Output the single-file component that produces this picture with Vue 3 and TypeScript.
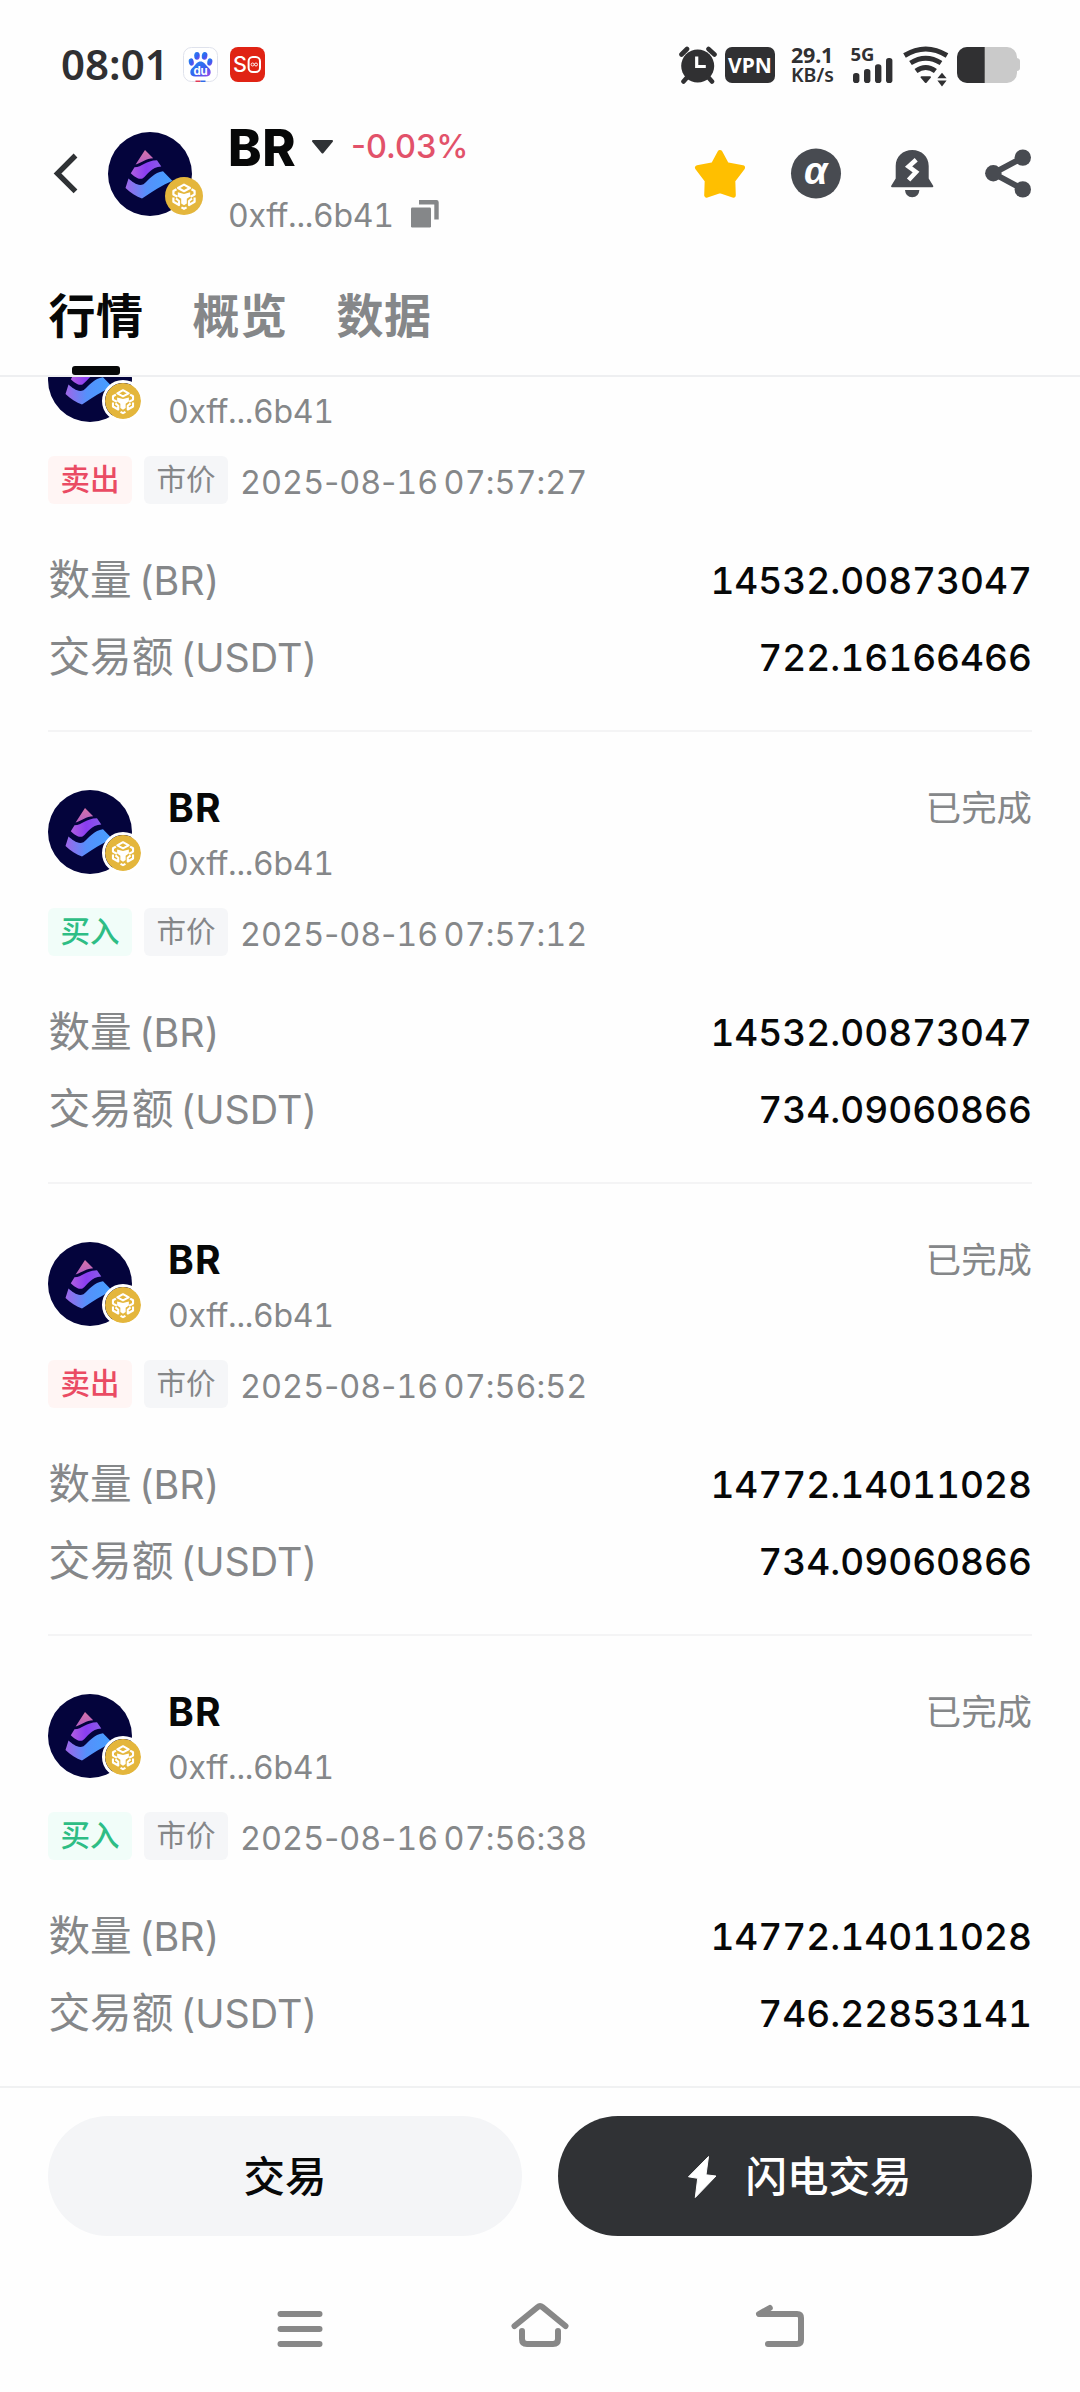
<script setup lang="ts">
interface Order {
  side: 'buy' | 'sell'
  date: string
  time: string
  amount: string
  total: string
}

const symbol = 'BR'
const address = '0xff...6b41'
const tabs = ['行情', '概览', '数据']
const activeTab = '行情'

const orders: Order[] = [
  { side: 'sell', date: '2025-08-16', time: '07:57:27', amount: '14532.00873047', total: '722.16166466' },
  { side: 'buy', date: '2025-08-16', time: '07:57:12', amount: '14532.00873047', total: '734.09060866' },
  { side: 'sell', date: '2025-08-16', time: '07:56:52', amount: '14772.14011028', total: '734.09060866' },
  { side: 'buy', date: '2025-08-16', time: '07:56:38', amount: '14772.14011028', total: '746.22853141' },
]
</script>

<template>
  <div class="screen">
    <svg class="defs" width="0" height="0" aria-hidden="true">
      <defs>
        <linearGradient id="tok-top" x1="0" y1="0" x2="0" y2="1">
          <stop offset="0" stop-color="#d673a8" />
          <stop offset="1" stop-color="#b45fc4" />
        </linearGradient>
        <linearGradient id="tok-mid" x1="0" y1="0" x2="1" y2="0">
          <stop offset="0" stop-color="#b05fe0" />
          <stop offset="0.5" stop-color="#8a3df2" />
          <stop offset="1" stop-color="#8a5ce8" />
        </linearGradient>
        <linearGradient id="tok-low" x1="0" y1="0" x2="1" y2="0">
          <stop offset="0" stop-color="#a065e8" />
          <stop offset="0.45" stop-color="#5590fb" />
          <stop offset="1" stop-color="#45a0ff" />
        </linearGradient>
        <linearGradient id="paw" x1="0" y1="0" x2="1" y2="1">
          <stop offset="0" stop-color="#1f8cf0" />
          <stop offset="0.6" stop-color="#3a5cf0" />
          <stop offset="1" stop-color="#a24be8" />
        </linearGradient>
        <symbol id="token" viewBox="0 0 84 84">
          <circle cx="42" cy="42" r="42" fill="#04043c" />
          <path d="M37 18L45.200 26.200C38 26.400 34 30.500 27.600 32.600Z" fill="url(#tok-top)" />
          <path d="M26.500 35.300C34 35.300 38 28.500 49 28.300L53.300 34.400C43 34.800 40 42.500 34.500 46.500C31 48 26 44.500 22.800 41.200Z" fill="url(#tok-mid)" />
          <path d="M20.500 46.600C25 50.500 30 54.500 35.500 52.300C42 47 46 40.300 55 39.300L64.500 49C55 52.500 43 60.500 34 66.500C28.500 64.500 22 60.500 17.500 56Z" fill="url(#tok-low)" />
        </symbol>
        <symbol id="chain" viewBox="0 0 38 38">
          <circle cx="19" cy="19" r="19" fill="#e4b63c" />
          <g fill="none" stroke="#fff" stroke-width="2.200" stroke-linejoin="round">
            <path d="M13 11L19 7.600L25 11L19 14.200Z" />
            <path d="M11.500 12.200L8.400 14V17.500L12.500 19.800" />
            <path d="M26.500 12.200L29.600 14V17.500L25.500 19.800" />
            <path d="M8.400 20.500V24.800L14 28V24L11 21.500" />
            <path d="M29.600 20.500V24.800L24 28V24L27 21.500" />
            <path d="M16.400 30.400L19 31.800L21.600 30.400" />
          </g>
          <path d="M12.800 15.200L19 17L25.200 15.200V19.600L21.800 21.800V26.400L19 28.200L16.200 26.400V21.800L12.800 19.600Z" fill="#fff" />
        </symbol>
      </defs>
    </svg>

    <div class="status">
      <span class="clock">08:01</span>
      <svg class="app-icon baidu" viewBox="0 0 35 35">
        <rect x="0.5" y="0.5" width="34" height="34" rx="8" fill="#fff" stroke="#dfe2ec" />
        <g fill="url(#paw)">
          <ellipse cx="8.3" cy="15" rx="2.5" ry="3.7" transform="rotate(-12 8.3 15)" />
          <ellipse cx="14" cy="8.8" rx="2.8" ry="3.9" />
          <ellipse cx="21.6" cy="8.8" rx="2.8" ry="3.9" transform="rotate(8 21.6 8.8)" />
          <ellipse cx="26.8" cy="15" rx="2.5" ry="3.7" transform="rotate(12 26.8 15)" />
          <path d="M17.5 14.5c3.2 0 4.6 2.6 6.4 4.6c2 2.100 3.800 3.400 3.800 6.200c0 2.800-2 4.300-4.800 4.300H12.200c-2.900 0-4.900-1.500-4.900-4.400c0-2.800 2-4 3.900-6.100c1.800-2 3.100-4.600 6.300-4.600z" />
        </g>
        <text x="17.6" y="28" text-anchor="middle" class="du">du</text>
        <path d="M12.500 34.300h5" stroke="#e33b57" stroke-width="1.600" />
        <path d="M17.500 34.300h5" stroke="#2e6bea" stroke-width="1.600" />
      </svg>
      <svg class="app-icon so" viewBox="0 0 35 35">
        <rect width="35" height="35" rx="8" fill="#e02314" />
        <text x="3" y="25.300" class="so-s">S</text>
        <rect x="18.600" y="10" width="11.400" height="15" rx="4.200" fill="none" stroke="#fff" stroke-width="2" />
        <circle cx="22.600" cy="17.500" r="1.500" fill="none" stroke="#fff" stroke-width="0.900" />
        <circle cx="26" cy="17.500" r="1.500" fill="none" stroke="#fff" stroke-width="0.900" />
      </svg>

      <div class="status-right">
        <svg class="alarm" width="40" height="38" viewBox="0 0 40 38">
          <circle cx="19.700" cy="20" r="16.500" fill="#303032" />
          <path d="M3.500 8.500L9 3M30.500 3L36.500 8.500M5.500 35.500L9 31.500M34 35.500L30.500 31.500" stroke="#303032" stroke-width="4.600" stroke-linecap="round" />
          <path d="M18.700 10.500V20.500H27.800" fill="none" stroke="#fff" stroke-width="3.200" />
        </svg>
        <span class="vpn">VPN</span>
        <span class="speed"><b>29.1</b><i>KB/s</i></span>
        <svg class="signal" width="44" height="38" viewBox="0 0 44 38">
          <text x="0.500" y="14.700" class="net">5G</text>
          <g fill="#303032">
            <rect x="3" y="27" width="6.400" height="10" rx="2.800" />
            <rect x="14" y="23" width="6.400" height="14" rx="2.800" />
            <rect x="25" y="18.300" width="6.400" height="18.700" rx="2.800" />
            <rect x="36" y="12" width="6.400" height="25" rx="2.800" />
          </g>
        </svg>
        <svg class="wifi" width="52" height="44" viewBox="0 0 52 44">
          <g fill="none" stroke="#303032" stroke-width="5">
            <path d="M4.500 11.500Q25.700 -1.500 47 11.500" />
            <path d="M10.500 19Q25.700 9.500 41 19" />
            <path d="M16 27Q25.700 20 35.400 27" />
          </g>
          <path d="M21.500 33.200h8.500l-4.250 4.800z" fill="#303032" stroke="#303032" stroke-width="2" stroke-linejoin="round" />
          <path d="M37.400 34.300h9.200L42 28.700zM37.400 36.500h9.200L42 42.600z" fill="#303032" />
        </svg>
        <svg class="battery" width="63" height="36" viewBox="0 0 63 36">
          <path d="M10 0H50A10 10 0 0 1 60 10V11Q63 11.500 63 14V21Q63 23.500 60 24V26A10 10 0 0 1 50 36H10A10 10 0 0 1 0 26V10A10 10 0 0 1 10 0Z" fill="#cacaca" />
          <path d="M10 0H27.700V36H10A10 10 0 0 1 0 26V10A10 10 0 0 1 10 0Z" fill="#303032" />
        </svg>
      </div>
    </div>

    <header class="header">
      <svg class="back" width="60" height="60" viewBox="0 0 60 60">
        <path d="M27.500 11.500L9.500 29.500L27.500 47.300" fill="none" stroke="#2f3235" stroke-width="5.400" />
      </svg>
      <div class="avatar">
        <svg width="84" height="84"><use href="#token" /></svg>
        <svg class="badge-lg" width="38" height="38"><use href="#chain" /></svg>
      </div>
      <div class="title">
        <div class="title-top">
          <span class="pair">{{ symbol }}</span>
          <svg class="caret" width="23" height="16" viewBox="0 0 23 16">
            <path d="M2 2H21L11.500 13.500Z" fill="#2f3235" stroke="#2f3235" stroke-width="2" stroke-linejoin="round" />
          </svg>
          <span class="change">-0.03%</span>
        </div>
        <div class="title-sub">
          <span class="address">{{ address }}</span>
          <svg class="copy" width="28" height="28" viewBox="0 0 28 28">
            <rect x="0" y="7.500" width="20" height="20" rx="1.200" fill="#858789" />
            <path d="M8 2.300H25.500V19.500" fill="none" stroke="#858789" stroke-width="4.400" stroke-linejoin="round" />
          </svg>
        </div>
      </div>
      <div class="actions">
        <svg width="60" height="60" viewBox="0 0 60 60">
          <path d="M30 8.500L36.600 20.600L52.500 23.800L42.800 36.500L43.300 51.200L30 46.600L16.700 51.200L17.200 36.500L7.500 23.800L23.400 20.600Z" fill="#ffbf00" stroke="#ffbf00" stroke-width="5" stroke-linejoin="round" />
        </svg>
        <svg width="60" height="60" viewBox="0 0 60 60">
          <circle cx="30" cy="29.500" r="25" fill="#484b51" />
          <text x="29.800" y="40" text-anchor="middle" class="alpha">α</text>
        </svg>
        <svg width="60" height="60" viewBox="0 0 60 60">
          <path d="M30.200 6C39.500 6 46.700 12.500 46.700 22V34.500L51.300 42Q51.500 43.300 50.300 43.300H10.100Q8.900 43.300 9.100 42L13.700 34.500V22C13.700 12.500 20.900 6 30.200 6Z" fill="#484b51" />
          <path d="M23 46H37.400Q36.800 53.200 30.200 53.200Q23.600 53.200 23 46Z" fill="#484b51" />
          <path d="M34.200 15.800L26.600 22.600L34 28L26.600 36" fill="none" stroke="#fff" stroke-width="4.600" stroke-linejoin="miter" />
        </svg>
        <svg width="60" height="60" viewBox="0 0 60 60">
          <path d="M45 13.500L15.300 29.300L45 45.300" fill="none" stroke="#484b51" stroke-width="6" />
          <circle cx="15.300" cy="29.300" r="8.200" fill="#484b51" />
          <circle cx="44.800" cy="13.600" r="8.200" fill="#484b51" />
          <circle cx="44.800" cy="45.400" r="8.200" fill="#484b51" />
        </svg>
      </div>
    </header>

    <nav class="tabs">
      <div v-for="tab in tabs" :key="tab" class="tab" :class="{ active: tab === activeTab }">{{ tab }}</div>
    </nav>

    <main class="list">
      <div class="list-inner">
        <article v-for="(order, i) in orders" :key="i" class="order">
          <div class="order-head">
            <div class="avatar">
              <svg width="84" height="84"><use href="#token" /></svg>
              <svg class="badge" width="36" height="36"><use href="#chain" /></svg>
            </div>
            <div class="names">
              <div class="name">{{ symbol }}</div>
              <div class="address">{{ address }}</div>
            </div>
            <div class="state">已完成</div>
          </div>
          <div class="meta">
            <span class="tag" :class="order.side">{{ order.side === 'buy' ? '买入' : '卖出' }}</span>
            <span class="tag kind">市价</span>
            <span class="when"><template v-for="(part, n) in order.date.split('-')" :key="n"><span v-if="n" class="dash">-</span>{{ part }}</template> {{ order.time }}</span>
          </div>
          <div class="line">
            <span class="label"><span class="cjk">数量</span>(BR)</span>
            <span class="value">{{ order.amount }}</span>
          </div>
          <div class="line">
            <span class="label"><span class="cjk">交易额</span>(USDT)</span>
            <span class="value">{{ order.total }}</span>
          </div>
        </article>
      </div>
    </main>

    <footer class="bottom">
      <div class="buttons">
        <button class="btn light">交易</button>
        <button class="btn dark">
          <svg width="48" height="48" viewBox="0 0 48 48">
            <path d="M30.500 3.500L10.500 23.800L19.700 25.300L17.300 44.500L38 23L28 21.800Z" fill="#fff" stroke="#fff" stroke-width="1" stroke-linejoin="round" />
          </svg>
          <span>闪电交易</span>
        </button>
      </div>
      <div class="system">
        <svg width="72" height="60" viewBox="0 0 72 60">
          <path d="M16.500 15H55.500M16.500 30H55.500M16.500 45H55.500" />
        </svg>
        <svg width="72" height="60" viewBox="0 0 72 60">
          <path d="M10.500 27L33.500 8.200Q36 6.200 38.500 8.200L61.500 27" />
          <path d="M18 32V40Q18 45 23 45H49Q54 45 54 40V32" />
        </svg>
        <svg width="72" height="60" viewBox="0 0 72 60">
          <path d="M25.800 9L15 15H53Q57 15 57 19V41Q57 45 53 45H24" />
        </svg>
      </div>
    </footer>
  </div>
</template>

<style>
body {
  margin: 0;
  background: #fefefe;
}
</style>

<style scoped>
.screen {
  width: 1080px;
  height: 2392px;
  display: flex;
  flex-direction: column;
  overflow: hidden;
  background: #fefefe;
  color: #070808;
  font-family: Inter, 'Noto Sans CJK SC', sans-serif;
}

svg {
  display: block;
  flex: none;
}

.defs {
  position: absolute;
}

/* status bar */
.status {
  height: 94px;
  padding: 35px 60px 0 61px;
  box-sizing: border-box;
  display: flex;
  align-items: flex-start;
  flex: none;
  color: #303032;
  font-family: 'Noto Sans', sans-serif;
}

.clock {
  width: 122px;
  font-size: 42px;
  font-weight: 600;
  line-height: 58px;
}

.app-icon {
  width: 35px;
  height: 35px;
  margin-top: 12px;
}

.so {
  margin-left: 12px;
}

.du {
  font: 700 11.5px Inter, sans-serif;
  fill: #fff;
}

.so-s {
  font: 500 21.5px Inter, sans-serif;
  fill: #fff;
}

.status-right {
  margin-left: auto;
  display: flex;
  align-items: flex-start;
}

.alarm {
  margin-top: 11px;
}

.vpn {
  width: 50px;
  height: 36px;
  margin: 12px 0 0 7px;
  border-radius: 7px;
  background: #303032;
  color: #fff;
  font-size: 21px;
  font-weight: 700;
  line-height: 36px;
  text-align: center;
}

.speed {
  width: 59px;
  padding-left: 16px;
  box-sizing: border-box;
  margin-top: 10px;
  display: flex;
  flex-direction: column;
}

.speed b {
  font-size: 21.5px;
  font-weight: 700;
  line-height: 20px;
  letter-spacing: -0.2px;
}

.speed i {
  font-size: 19.5px;
  font-style: normal;
  font-weight: 600;
  line-height: 20px;
}

.signal {
  margin: 11px 0 0 16px;
}

.net {
  font: 700 18.5px 'Noto Sans', sans-serif;
  fill: #303032;
}

.wifi {
  margin: 9px 0 0 6px;
}

.battery {
  margin: 12px 0 0 5px;
}

/* header */
.header {
  height: 160px;
  padding: 0 42px 0 48px;
  display: flex;
  align-items: center;
  flex: none;
}

.avatar {
  position: relative;
  width: 84px;
  height: 84px;
  flex: none;
}

.badge-lg {
  position: absolute;
  left: 57px;
  top: 45px;
}

.badge {
  position: absolute;
  left: 54px;
  top: 42px;
  border: 3px solid #fff;
  border-radius: 50%;
}

.title {
  margin: 3px 0 0 36px;
}

.title-top {
  height: 60px;
  display: flex;
  align-items: center;
}

.pair {
  width: 70px;
  margin-top: 1px;
  font-size: 50.5px;
  font-weight: 800;
  letter-spacing: 0.8px;
}

.caret {
  margin-left: 13px;
}

.change {
  margin-left: 17px;
  font-size: 32.4px;
  font-weight: 500;
  color: #e2526a;
}

.title-sub {
  margin-top: 18px;
  display: flex;
  align-items: center;
}

.address {
  font-size: 32px;
  line-height: 40px;
  letter-spacing: -0.3px;
  font-feature-settings: 'tnum';
  color: #858789;
}

.title-sub .address {
  padding-top: 2px;
  line-height: 38px;
}

.copy {
  margin-left: 17px;
  margin-top: -2px;
}

.actions {
  margin-left: auto;
  display: flex;
  gap: 36px;
}

.alpha {
  font: italic 700 38px 'Liberation Sans', sans-serif;
  fill: #fff;
}

/* tabs */
.tabs {
  height: 123px;
  box-sizing: border-box;
  padding: 0 48px;
  display: flex;
  gap: 48px;
  flex: none;
  border-bottom: 2px solid #eeeff1;
}

.tab {
  position: relative;
  width: 96px;
  height: 121px;
  font-size: 47px;
  font-weight: 700;
  line-height: 124px;
  letter-spacing: 0.6px;
  text-align: center;
  color: #858789;
}

.tab.active {
  color: #070808;
}

.tab.active::after {
  content: '';
  position: absolute;
  left: 24px;
  bottom: 0;
  width: 48px;
  height: 9px;
  border-radius: 3px;
  background: #070808;
}

/* orders */
.list {
  height: 1709px;
  padding: 0 48px;
  overflow: hidden;
  flex: none;
}

.list-inner {
  margin-top: -97px;
}

.order {
  height: 452px;
  box-sizing: border-box;
  padding-top: 58px;
  border-bottom: 2px solid #f4f4f5;
}

.order-head {
  height: 94px;
  display: flex;
}

.names {
  margin-left: 36px;
}

.name {
  margin-bottom: 18px;
  font-size: 39px;
  font-weight: 700;
  line-height: 36px;
  letter-spacing: 1.2px;
}

.state {
  margin-left: auto;
  font-size: 35.4px;
  line-height: 38px;
  color: #858789;
}

.meta {
  height: 48px;
  margin-top: 24px;
  display: flex;
  align-items: center;
}

.tag {
  width: 84px;
  height: 48px;
  border-radius: 6px;
  font-size: 29.5px;
  line-height: 47px;
  text-align: center;
}

.tag.buy {
  color: #2ebd85;
  background: #f1fdf9;
  font-weight: 500;
}

.tag.sell {
  color: #ea4b63;
  background: #fff5f4;
  font-weight: 500;
}

.tag.kind {
  margin: 0 12px;
  color: #858789;
  background: #f5f6f8;
}

.when {
  padding-top: 4px;
  font-size: 32.4px;
  letter-spacing: 0.05px;
  word-spacing: -3.5px;
  font-feature-settings: 'tnum';
  white-space: nowrap;
  color: #858789;
}

.dash {
  font-feature-settings: normal;
}

.line {
  display: flex;
  justify-content: space-between;
  margin-top: 33px;
  line-height: 44px;
}

.meta + .line {
  margin-top: 55px;
}

.label {
  padding-left: 0.5px;
  font-size: 39.4px;
  color: #858789;
}

.cjk {
  margin-right: 7.5px;
  font-size: 41.6px;
  line-height: 0;
}

.value {
  font-size: 37px;
  font-weight: 500;
  font-feature-settings: 'tnum';
}

/* bottom bar */
.bottom {
  flex: 1;
  border-top: 2px solid #f0f1f2;
}

.buttons {
  padding: 28px 48px 0;
  display: flex;
  gap: 36px;
}

.btn {
  flex: 1;
  height: 120px;
  padding: 1px 0 0;
  border: 0;
  border-radius: 60px;
  display: flex;
  align-items: center;
  justify-content: center;
  gap: 19px;
  font: 500 41.5px/60px Inter, 'Noto Sans CJK SC', sans-serif;
}

.light {
  background: #f4f5f7;
  color: #070808;
}

.dark {
  background: #303235;
  color: #fff;
}

.system {
  margin-top: 63px;
  display: flex;
  justify-content: center;
  gap: 168px;
}

.system path {
  fill: none;
  stroke: #888;
  stroke-width: 6;
  stroke-linecap: round;
  stroke-linejoin: round;
}
</style>
